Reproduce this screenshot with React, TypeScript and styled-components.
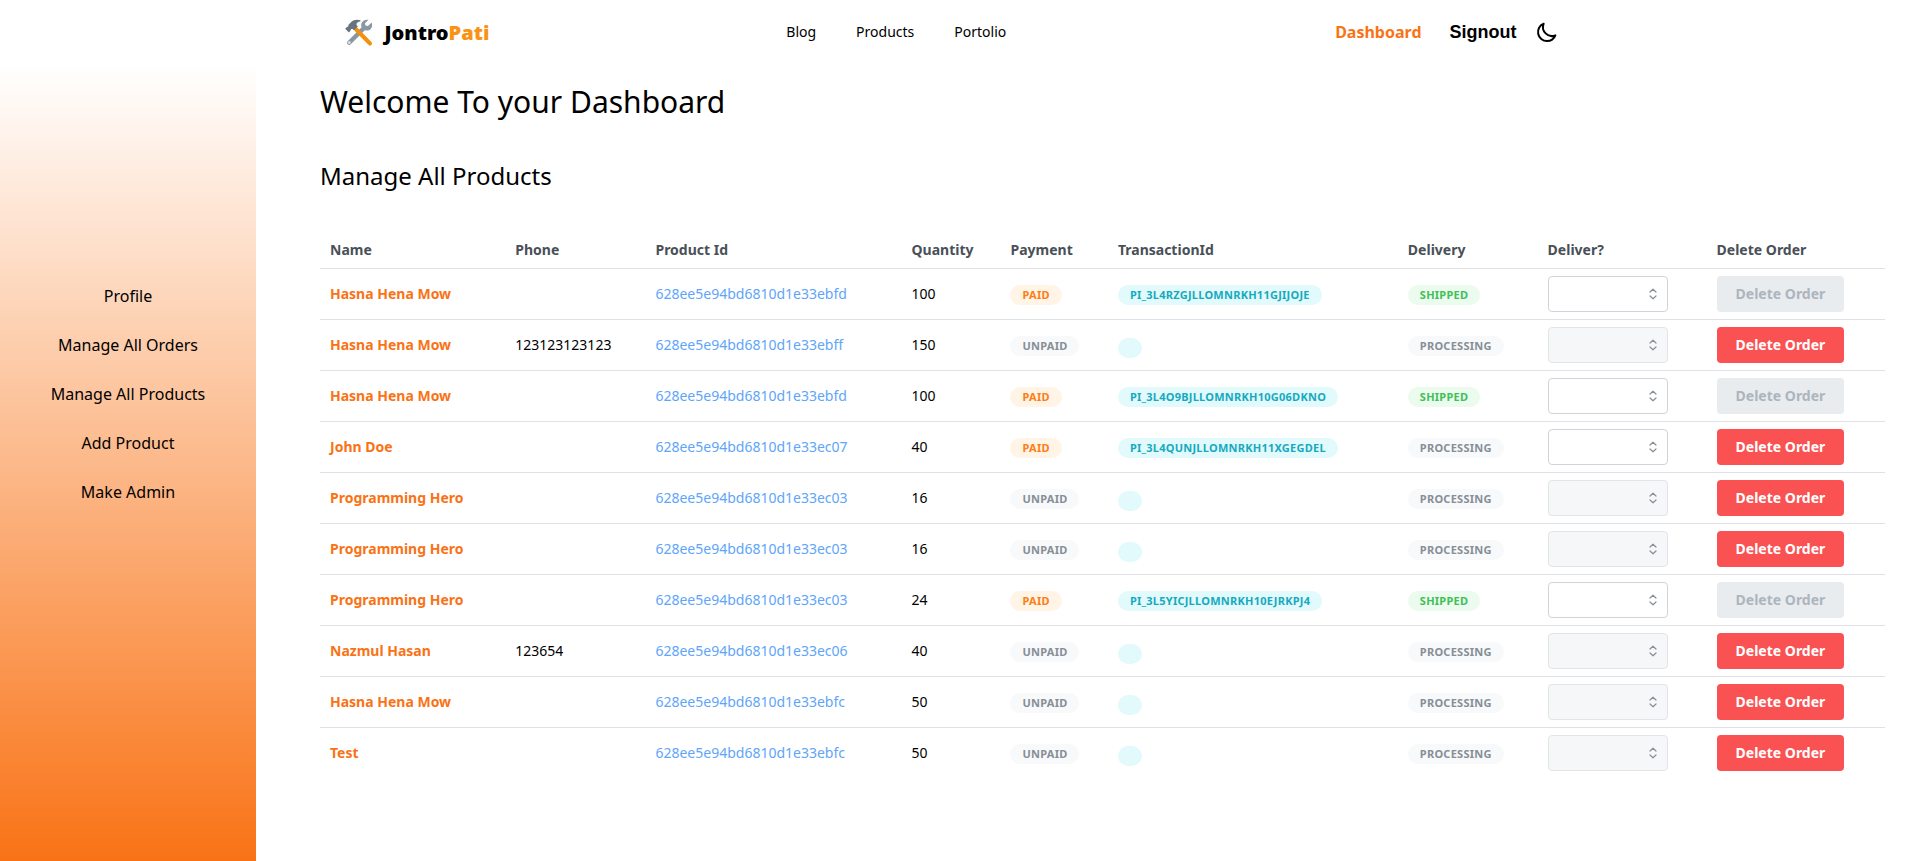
import React, { useState } from 'react';
import styled, { createGlobalStyle } from 'styled-components';

const GlobalStyle = createGlobalStyle`
  *, *::before, *::after { box-sizing: border-box; }
  body {
    margin: 0;
    background: #fff;
    color: #000;
    font-family: 'Noto Sans', sans-serif;
    font-size: 16px;
    line-height: 24px;
  }
  a { color: inherit; text-decoration: none; }
`;

const Page = styled.div`
  min-height: 100vh;
  display: flex;
  flex-direction: column;
`;

const Header = styled.header`
  width: 100%;
  max-width: 1280px;
  height: 64px;
  margin: 0 auto;
  padding: 0 34px 0 32px;
  display: flex;
  align-items: center;
  justify-content: space-between;
`;

const Brand = styled.a`
  display: flex;
  align-items: center;
  gap: 12px;
  padding-top: 2px;
  font-size: 20px;
  font-weight: 900;
  line-height: 28px;
`;

const BrandAccent = styled.span`
  color: #fb9214;
`;

const Nav = styled.nav`
  display: flex;
  gap: 40px;
  padding-right: 32px;
  font-size: 14px;
  line-height: 20px;
`;

const Actions = styled.div`
  display: flex;
  align-items: center;
`;

const DashboardLink = styled.a`
  margin-right: 28px;
  color: #f97316;
  font-weight: 700;
`;

const PlainButton = styled.button`
  display: flex;
  padding: 0;
  border: 0;
  background: none;
  color: #000;
  cursor: pointer;
`;

const SignoutButton = styled(PlainButton)`
  margin-right: 18px;
  font: 700 18px/28px 'Liberation Sans', sans-serif;
`;

const Body = styled.div`
  flex: 1;
  display: flex;
`;

const Sidebar = styled.aside`
  flex: 0 0 256px;
  background: linear-gradient(to bottom, #fff, #f97316);
`;

const Menu = styled.ul`
  margin: 0;
  padding: 220px 0 0;
  list-style: none;
  display: flex;
  flex-direction: column;
  align-items: center;
  gap: 25px;
`;

const Main = styled.main`
  flex: 1;
  min-width: 0;
  padding: 18px 20px 64px 64px;
`;

const Title = styled.h1`
  margin: 0;
  font-size: 30px;
  font-weight: 400;
  line-height: 40px;
`;

const Subtitle = styled.h2`
  margin: 38px 0 40px;
  font-size: 24px;
  font-weight: 400;
  line-height: 32px;
`;

const Table = styled.table`
  width: 100%;
  border-collapse: collapse;
  font-size: 14px;
  line-height: 22px;
`;

const HeadCell = styled.th`
  padding: 7px 10px;
  border-bottom: 1px solid #dee2e6;
  color: #495057;
  font-weight: 700;
  text-align: left;
`;

const Row = styled.tr`
  &:not(:last-child) td { border-bottom: 1px solid #dee2e6; }
`;

const Cell = styled.td`
  padding: 7px 10px;
`;

const CustomerName = styled.span`
  color: #f97316;
  font-weight: 700;
`;

const ProductLink = styled.a`
  color: #60a5fa;
`;

const tones = {
  orange: ['#fff4e6', '#fd7e14'],
  gray: ['#f8f9fa', '#868e96'],
  cyan: ['#e3fafc', '#15aabf'],
  green: ['#ebfbee', '#40c057'],
};

const Badge = styled.span<{ $tone: keyof typeof tones }>`
  display: inline-flex;
  align-items: center;
  height: 20px;
  min-width: 24px;
  padding: 0 12px;
  border-radius: 32px;
  vertical-align: middle;
  background: ${(p) => tones[p.$tone][0]};
  color: ${(p) => tones[p.$tone][1]};
  font-size: 11px;
  font-weight: 700;
  letter-spacing: 0.25px;
  line-height: 18px;
  text-transform: uppercase;
  white-space: nowrap;

  &:empty { margin-top: 6px; }
`;

const SelectBox = styled.div`
  position: relative;
  width: 120px;
`;

const Select = styled.select`
  display: block;
  width: 100%;
  height: 36px;
  padding: 0 30px 0 12px;
  appearance: none;
  border: 1px solid #ced4da;
  border-radius: 4px;
  background: #fff;
  font: 14px/34px 'Noto Sans', sans-serif;

  &:disabled {
    background: #f1f3f5;
    opacity: 0.6;
  }
`;

const Chevrons = styled.svg`
  position: absolute;
  right: 9px;
  top: 12px;
  pointer-events: none;
`;

const DeleteButton = styled.button`
  display: block;
  height: 36px;
  padding: 0 18px;
  border: 1px solid transparent;
  border-radius: 4px;
  background: #fa5252;
  color: #fff;
  font: 700 14px/34px 'Noto Sans', sans-serif;
  white-space: nowrap;
  cursor: pointer;

  &:disabled {
    background: #e9ecef;
    color: #adb5bd;
    cursor: not-allowed;
  }
`;

const ToolsLogo = () => (
  <svg width="28" height="28" viewBox="0 0 28 28" aria-hidden="true">
    <path d="M4.2 23.8 L19.2 8.8" stroke="#8899a6" strokeWidth="4.4" strokeLinecap="round" />
    <path d="M26.6 3.6 L23 7.1 L20.4 6.6 L20 4.3 L23.5.8 C20.5.1 17.3 1.6 16.4 4.5 C15.4 7.8 17.6 11.2 21.3 11.5 C25.8 11.8 28.3 7.6 26.6 3.6Z" fill="#8899a6" />
    <circle cx="4.3" cy="23.6" r="1.5" fill="#d5dde3" />
    <path d="M10.2 9.4 L24.9 24.4" stroke="#f4900c" strokeWidth="4.2" strokeLinecap="round" />
    <path d="M15.4 1.3 C12 .1 8.5.7 6.3 3 L3.3 6 C3.8 7.2 3 8.1 1.9 8 L.2 9.7 L3.9 13.4 L5.6 11.6 C5.5 10.3 6.4 9.6 7.6 10 L9 11.2 L12.9 7.3 L11.5 5.9 C11.3 4.1 13 2.5 15.4 2.5Z" fill="#66757f" />
  </svg>
);

const MoonIcon = () => (
  <svg width="24" height="24" viewBox="0 0 24 24" fill="none" stroke="currentColor" strokeWidth="2" strokeLinecap="round" strokeLinejoin="round" aria-hidden="true">
    <path d="M20.354 15.354A9 9 0 018.646 3.646 9.003 9.003 0 0012 21a9.003 9.003 0 008.354-5.646z" />
  </svg>
);

interface Order {
  name: string;
  phone?: string;
  product: string;
  quantity: number;
  transaction?: string;
  shipped?: boolean;
}

const orders: Order[] = [
  { name: 'Hasna Hena Mow', product: '628ee5e94bd6810d1e33ebfd', quantity: 100, transaction: 'pi_3L4RzGJLlomnrkH11GjIJOJE', shipped: true },
  { name: 'Hasna Hena Mow', phone: '123123123123', product: '628ee5e94bd6810d1e33ebff', quantity: 150 },
  { name: 'Hasna Hena Mow', product: '628ee5e94bd6810d1e33ebfd', quantity: 100, transaction: 'pi_3L4O9BJLlomnrkH10G06DKNO', shipped: true },
  { name: 'John Doe', product: '628ee5e94bd6810d1e33ec07', quantity: 40, transaction: 'pi_3L4QUNJLlomnrkH11XGEGDEL' },
  { name: 'Programming Hero', product: '628ee5e94bd6810d1e33ec03', quantity: 16 },
  { name: 'Programming Hero', product: '628ee5e94bd6810d1e33ec03', quantity: 16 },
  { name: 'Programming Hero', product: '628ee5e94bd6810d1e33ec03', quantity: 24, transaction: 'pi_3L5YICJLlomnrkH10EJRKPJ4', shipped: true },
  { name: 'Nazmul Hasan', phone: '123654', product: '628ee5e94bd6810d1e33ec06', quantity: 40 },
  { name: 'Hasna Hena Mow', product: '628ee5e94bd6810d1e33ebfc', quantity: 50 },
  { name: 'Test', product: '628ee5e94bd6810d1e33ebfc', quantity: 50 },
];

const columns = ['Name', 'Phone', 'Product Id', 'Quantity', 'Payment', 'TransactionId', 'Delivery', 'Deliver?', 'Delete Order'];
const menu = ['Profile', 'Manage All Orders', 'Manage All Products', 'Add Product', 'Make Admin'];

function DeliverSelect({ disabled, label }: { disabled: boolean; label: string }) {
  const [value, setValue] = useState('');
  return (
    <SelectBox>
      <Select aria-label={label} disabled={disabled} value={value} onChange={(e) => setValue(e.target.value)}>
        <option value="" />
        <option value="shipped">Shipped</option>
      </Select>
      <Chevrons width="12" height="12" viewBox="0 0 12 12" fill="none" stroke="#868e96" strokeWidth="1.2" strokeLinecap="round" strokeLinejoin="round" aria-hidden="true">
        <path d="M3 4 L6 1.2 L9 4 M3 8 L6 10.8 L9 8" />
      </Chevrons>
    </SelectBox>
  );
}

export default function App() {
  return (
    <Page>
      <GlobalStyle />
      <Header>
        <Brand href="#">
          <ToolsLogo />
          <span>Jontro<BrandAccent>Pati</BrandAccent></span>
        </Brand>
        <Nav>
          <a href="#blog">Blog</a>
          <a href="#products">Products</a>
          <a href="#portfolio">Portolio</a>
        </Nav>
        <Actions>
          <DashboardLink href="#dashboard">Dashboard</DashboardLink>
          <SignoutButton type="button">Signout</SignoutButton>
          <PlainButton type="button" aria-label="Toggle dark mode"><MoonIcon /></PlainButton>
        </Actions>
      </Header>
      <Body>
        <Sidebar>
          <Menu>
            {menu.map((item) => (
              <li key={item}><a href="#menu">{item}</a></li>
            ))}
          </Menu>
        </Sidebar>
        <Main>
          <Title>Welcome To your Dashboard</Title>
          <Subtitle>Manage All Products</Subtitle>
          <Table>
            <thead>
              <tr>{columns.map((c) => <HeadCell key={c} scope="col">{c}</HeadCell>)}</tr>
            </thead>
            <tbody>
              {orders.map((o, i) => (
                <Row key={i}>
                  <Cell><CustomerName>{o.name}</CustomerName></Cell>
                  <Cell>{o.phone}</Cell>
                  <Cell><ProductLink href="#product">{o.product}</ProductLink></Cell>
                  <Cell>{o.quantity}</Cell>
                  <Cell><Badge $tone={o.transaction ? 'orange' : 'gray'}>{o.transaction ? 'Paid' : 'Unpaid'}</Badge></Cell>
                  <Cell><Badge $tone="cyan">{o.transaction}</Badge></Cell>
                  <Cell><Badge $tone={o.shipped ? 'green' : 'gray'}>{o.shipped ? 'Shipped' : 'Processing'}</Badge></Cell>
                  <Cell><DeliverSelect disabled={!o.transaction} label={`Delivery status for order ${i + 1}`} /></Cell>
                  <Cell><DeleteButton type="button" disabled={o.shipped}>Delete Order</DeleteButton></Cell>
                </Row>
              ))}
            </tbody>
          </Table>
        </Main>
      </Body>
    </Page>
  );
}
